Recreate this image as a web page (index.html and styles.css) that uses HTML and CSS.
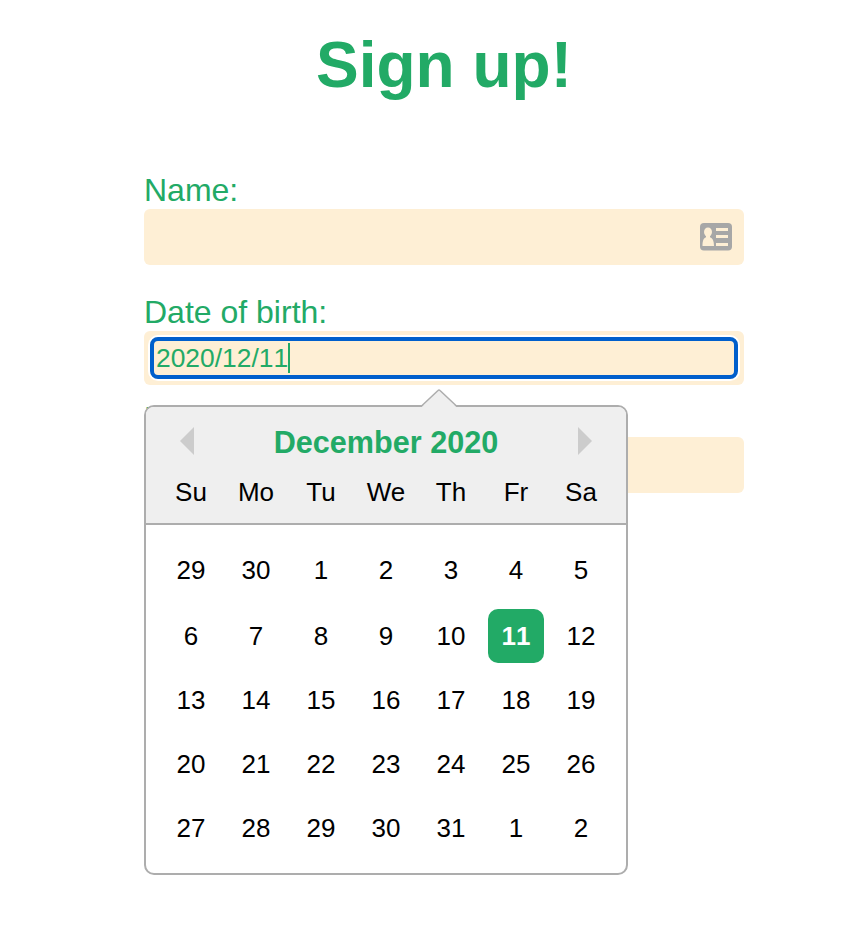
FILE: index.html
```html
<!DOCTYPE html>
<html lang="en">
<head>
<meta charset="utf-8">
<title>Sign up!</title>
<link rel="stylesheet" href="styles.css">
</head>
<body>
<form class="signup">
  <h1 class="title">Sign up!</h1>
  <div class="group">
    <div class="label">Name:</div>
    <div class="field">
      <svg class="card-icon" width="32" height="28" viewBox="0 0 32 28">
        <rect width="32" height="27.500" rx="4" fill="#a7a7a7"/>
        <g fill="#feefd5">
          <ellipse cx="8" cy="9" rx="4" ry="4.500"/>
          <path d="M6 12h4v2.200c2.600 1 4 3.600 4 8.800H2.500c0-5.200 1-7.800 3.500-8.800z"/>
          <path d="M16 5h12v3H16zM16 12h12v3H16zM16 20h12v3H16z"/>
        </g>
      </svg>
    </div>
  </div>
  <div class="group group-date">
    <div class="label">Date of birth:</div>
    <div class="field field-date">
      <div class="focused"><span>2020/12/11</span><i class="caret"></i></div>
    </div>
    <div class="picker">
      <svg class="pointer" width="38" height="20" viewBox="0 0 38 20">
        <path d="M1.500 18L18 1.500Q19 .5 20 1.500L36.500 18V20H1.500z" fill="#efefef"/>
        <path d="M1 17.500L18 1.500Q19 .5 20 1.500L37 17.500" fill="none" stroke="#adadad" stroke-width="1.500"/>
      </svg>
      <div class="head">
        <div class="month">
          <svg width="14" height="28" viewBox="0 0 14 28"><path d="M14 0v28L0 14z" fill="#ccc"/></svg>
          <strong>December 2020</strong>
          <svg width="14" height="28" viewBox="0 0 14 28"><path d="M0 0v28l14-14z" fill="#ccc"/></svg>
        </div>
        <div class="week"><span>Su</span><span>Mo</span><span>Tu</span><span>We</span><span>Th</span><span>Fr</span><span>Sa</span></div>
      </div>
      <div class="days">
        <div class="week"><span>29</span><span>30</span><span>1</span><span>2</span><span>3</span><span>4</span><span>5</span></div>
        <div class="week week-selected"><span>6</span><span>7</span><span>8</span><span>9</span><span>10</span><span class="selected">11</span><span>12</span></div>
        <div class="week"><span>13</span><span>14</span><span>15</span><span>16</span><span>17</span><span>18</span><span>19</span></div>
        <div class="week"><span>20</span><span>21</span><span>22</span><span>23</span><span>24</span><span>25</span><span>26</span></div>
        <div class="week"><span>27</span><span>28</span><span>29</span><span>30</span><span>31</span><span>1</span><span>2</span></div>
      </div>
    </div>
  </div>
  <div class="group">
    <div class="label">Email:</div>
    <div class="field"></div>
  </div>
</form>
</body>
</html>
```
FILE: styles.css
```css
* { box-sizing: border-box; }

body {
  min-height: 930px;
  margin: 0;
  background: #fff;
  color: #22aa66;
  font-family: "Liberation Sans", Arial, Helvetica, sans-serif;
}

svg { display: block; }

.signup {
  width: 600px;
  min-height: 930px;
  margin-left: 144px;
  padding-top: 28px;
}

.title {
  margin: 0 0 71px;
  font-size: 64px;
  line-height: 74px;
  text-align: center;
}

.group { margin-bottom: 30px; }

.group-date {
  position: relative;
  margin-bottom: 16px;
}

.label {
  height: 36px;
  font-size: 32px;
  line-height: 34px;
}

.field {
  display: flex;
  align-items: center;
  justify-content: flex-end;
  height: 56px;
  padding-right: 12px;
  border-radius: 6px;
  background: #feefd5;
}

.field-date {
  height: 54px;
  padding: 0 6px;
}

.focused {
  display: flex;
  align-items: center;
  width: 588px;
  height: 42px;
  padding-left: 2px;
  border: 4px solid #005fcc;
  border-radius: 8px;
  box-shadow: 0 0 0 2px #fff;
  font-size: 26.4px;
  font-kerning: none;
  line-height: 30px;
}

.caret {
  width: 2px;
  height: 30px;
  background: #22aa66;
}

.picker {
  position: absolute;
  top: 110px;
  left: 0;
  width: 484px;
  height: 470px;
  border: 2px solid #adadad;
  border-radius: 10px;
  background: #fff;
  color: #000;
  font-size: 26px;
}

.pointer {
  position: absolute;
  top: -18px;
  left: 274px;
}

.head {
  height: 118px;
  border-bottom: 2px solid #adadad;
  border-radius: 8px 8px 0 0;
  background: #efefef;
}

.month {
  display: flex;
  align-items: center;
  justify-content: space-between;
  height: 68px;
  padding: 0 34px;
}

.month strong {
  padding-top: 2px;
  color: #22aa66;
  font-size: 30.600px;
}

.week {
  display: grid;
  grid-template-columns: repeat(7, 65px);
  align-items: center;
  justify-content: center;
  height: 64px;
  text-align: center;
}

.head .week { height: 34px; }

.days {
  padding-top: 13px;
  font-kerning: none;
}

.week-selected {
  height: 66px;
  padding-top: 2px;
}

.selected {
  justify-self: center;
  width: 56px;
  height: 54px;
  border-radius: 10px;
  background: #22aa66;
  color: #fff;
  font-weight: bold;
  line-height: 54px;
}
```
